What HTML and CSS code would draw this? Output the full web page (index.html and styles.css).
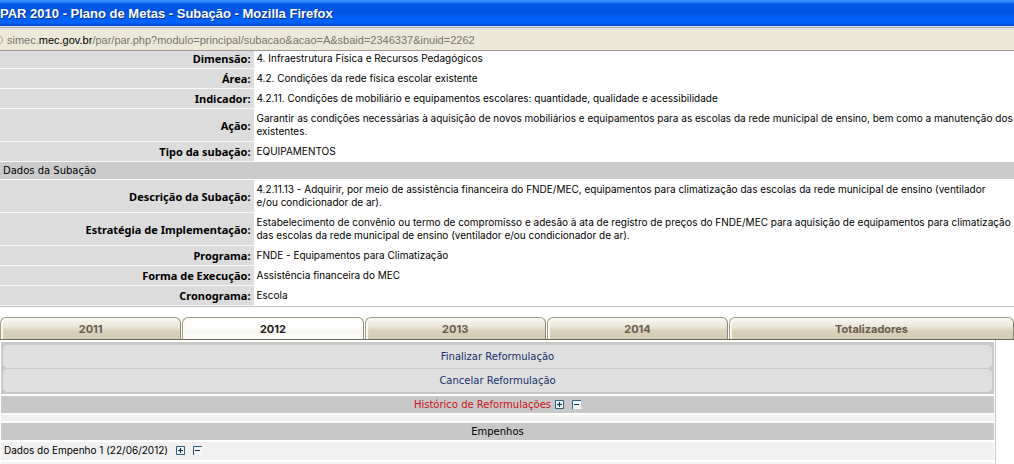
FILE: index.html
```html
<!DOCTYPE html>
<html lang="pt-BR">
<head>
<meta charset="utf-8">
<title>PAR 2010 - Plano de Metas - Subação</title>
<link rel="stylesheet" href="styles.css">
</head>
<body>
<header class="titlebar">PAR 2010 - Plano de Metas - Subação - Mozilla Firefox</header>
<div class="urlbar">
  <svg class="url-icon" width="6" height="12" viewBox="0 0 6 12" aria-hidden="true"><circle cx="-2" cy="6" r="4.5" fill="none" stroke="#a5a294"/></svg>
  <span>simec.<b class="domain">mec.gov.br</b>/par/par.php?modulo=principal/subacao&amp;acao=A&amp;sbaid=2346337&amp;inuid=2262</span>
</div>
<main>
  <table class="details">
    <tbody>
      <tr class="first"><th scope="row">Dimensão:</th><td>4. Infraestrutura Física e Recursos Pedagógicos</td></tr>
      <tr><th scope="row">Área:</th><td>4.2. Condições da rede física escolar existente</td></tr>
      <tr><th scope="row">Indicador:</th><td>4.2.11. Condições de mobiliário e equipamentos escolares: quantidade, qualidade e acessibilidade</td></tr>
      <tr><th scope="row">Ação:</th><td>Garantir as condições necessárias à aquisição de novos mobiliários e equipamentos para as escolas da rede municipal de ensino, bem como a manutenção dos<br>existentes.</td></tr>
      <tr><th scope="row">Tipo da subação:</th><td>EQUIPAMENTOS</td></tr>
      <tr><td class="section" colspan="2">Dados da Subação</td></tr>
      <tr><th scope="row">Descrição da Subação:</th><td>4.2.11.13 - Adquirir, por meio de assistência financeira do FNDE/MEC, equipamentos para climatização das escolas da rede municipal de ensino (ventilador<br>e/ou condicionador de ar).</td></tr>
      <tr><th scope="row">Estratégia de Implementação:</th><td>Estabelecimento de convênio ou termo de compromisso e adesão à ata de registro de preços do FNDE/MEC para aquisição de equipamentos para climatização<br>das escolas da rede municipal de ensino (ventilador e/ou condicionador de ar).</td></tr>
      <tr><th scope="row">Programa:</th><td>FNDE - Equipamentos para Climatização</td></tr>
      <tr><th scope="row">Forma de Execução:</th><td>Assistência financeira do MEC</td></tr>
      <tr><th scope="row">Cronograma:</th><td>Escola</td></tr>
    </tbody>
  </table>
  <nav class="tabs">
    <button class="tab" type="button">2011</button>
    <button class="tab active" type="button">2012</button>
    <button class="tab" type="button">2013</button>
    <button class="tab" type="button">2014</button>
    <button class="tab" type="button">Totalizadores</button>
  </nav>
  <section class="panel">
    <div class="actions">
      <button class="action" type="button">Finalizar Reformulação</button>
      <button class="action" type="button">Cancelar Reformulação</button>
    </div>
    <div class="bar history">
      <span>Histórico de Reformulações</span>
      <button class="toggle" type="button" aria-label="Expandir histórico"><svg width="9" height="9" viewBox="0 0 9 9"><path d="M.5 .5h8v8h-8z" fill="#eef5f8" stroke="#2f6280"/><path d="M2 4.500h5M4.500 2v5" stroke="#123c58"/><path d="M3.500 3.500h2v2h-2z" fill="#123c58"/></svg></button>
      <button class="toggle" type="button" aria-label="Recolher histórico"><svg width="9" height="9" viewBox="0 0 9 9"><path d="M0 0h9v9h-9z" fill="#f4f8f8"/><path d="M.5 9V.5H9" fill="none" stroke="#2f6280"/><path d="M2 4.500h5" stroke="#102c40"/></svg></button>
    </div>
    <div class="spacer"></div>
    <div class="bar heading">Empenhos</div>
    <div class="entry">
      <span>Dados do Empenho 1 (22/06/2012)</span>
      <button class="toggle" type="button" aria-label="Expandir empenho"><svg width="9" height="9" viewBox="0 0 9 9"><path d="M.5 .5h8v8h-8z" fill="#eef5f8" stroke="#2f6280"/><path d="M2 4.500h5M4.500 2v5" stroke="#123c58"/><path d="M3.500 3.500h2v2h-2z" fill="#123c58"/></svg></button>
      <button class="toggle" type="button" aria-label="Recolher empenho"><svg width="9" height="9" viewBox="0 0 9 9"><path d="M0 0h9v9h-9z" fill="#f4f8f8"/><path d="M.5 9V.5H9" fill="none" stroke="#2f6280"/><path d="M2 4.500h5" stroke="#102c40"/></svg></button>
    </div>
    <div class="rest"></div>
  </section>
</main>
</body>
</html>
```
FILE: styles.css
```css
* { box-sizing: border-box; }
body {
  margin: 0;
  min-height: 100vh;
  display: flex;
  flex-direction: column;
  background: #fff;
  color: #000;
  font: 10px/13px Inter, sans-serif;
}
button {
  margin: 0;
  padding: 0;
  border: 0;
  background: none;
  color: inherit;
  font: inherit;
  cursor: pointer;
}
main { flex: 1; display: flex; flex-direction: column; }

.titlebar {
  height: 26px;
  background: linear-gradient(#3d95ff 0, #2a84f8 2px, #0058e6 4px, #0054e3 13px, #0062fb 18px, #0062fb 23px, #0043c0 26px);
  color: #fff;
  font: bold 13px/27px "Liberation Sans", sans-serif;
  text-shadow: 1px 1px #0a2f8c;
  white-space: nowrap;
}
.urlbar {
  height: 25px;
  display: flex;
  align-items: center;
  gap: 1px;
  padding-top: 3px;
  border-top: 1px solid #dfe3ee;
  border-bottom: 1px solid #9d9b91;
  box-shadow: inset 0 1px #a9a89e, inset 0 3px #e6e4e0;
  background: #ece9d8;
  color: #77756c;
  font: 11px/14px "Liberation Sans", sans-serif;
  white-space: nowrap;
}
.domain { color: #000; font-weight: normal; }

.details { width: 100%; border-spacing: 0; border-bottom: 1px solid #bfc3b6; }
.details th, .details td { padding: 3px; border-bottom: 1px solid #fff; }
.details td { padding-right: 0; }
.details th {
  width: 25%;
  background: #dcdcdc;
  border-bottom-color: #f8f8f8;
  font: bold 11px/13px "Noto Sans", sans-serif;
  text-align: right;
  white-space: nowrap;
}
.details .first th, .details .first td { padding-top: 1px; }
.details .section {
  padding: 2px 3px;
  background: #cbcbcb;
  font: 10px/13px "DejaVu Sans", sans-serif;
}

.tabs {
  display: grid;
  grid-template-columns: repeat(4, 182fr) 286fr;
  gap: 1px;
  margin-top: 10px;
  border-bottom: 1px solid #6c6755;
}
.tab {
  height: 22px;
  border: 1px solid #a09c88;
  border-right-color: #8c8874;
  border-bottom: 0;
  border-radius: 6px 6px 0 0;
  background: linear-gradient(#faf9f4 0, #e9e5d6 9px, #d9d2bc 13px, #d3cbb1 100%);
  box-shadow: inset 2px 1px 1px #fbf9ed;
  color: #6b5c4c;
  font: bold 11px/20px Inter, sans-serif;
}
.tab.active { background: linear-gradient(#fff 0, #fff 9px, #f5f4ee 13px, #fdfdfb 100%); color: #222; }

.panel {
  flex: 1;
  display: flex;
  flex-direction: column;
  gap: 2px;
  margin-right: 18px;
  padding: 2px 1px 0;
  border-right: 1px solid #c8c8c8;
  font-family: "DejaVu Sans", sans-serif;
}
.actions {
  display: grid;
  gap: 1px;
  padding: 3px 2px 2px;
  background: #c8c8c8;
}
.action {
  padding: 5px;
  border-radius: 5px;
  background: #dfdfdf;
  color: #15306b;
}
.bar {
  display: flex;
  justify-content: center;
  align-items: center;
  padding: 2px;
  background: #c8c8c8;
}
.history { gap: 4px; color: #cc1016; }
.history .toggle + .toggle { margin-left: 4px; }
.spacer { height: 6px; background: #f1f1f1; }
.toggle svg { display: block; }
.entry {
  display: flex;
  align-items: center;
  gap: 8px;
  padding: 2px 3px 3px;
  background: #f0f0f0;
  font-family: Inter, sans-serif;
}
.rest { flex: 1; background: #f4f4f4; }
```
